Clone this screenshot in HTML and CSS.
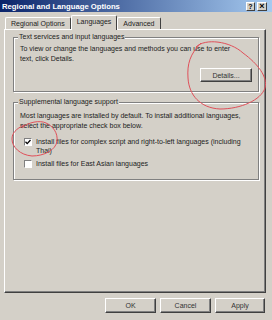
FILE: index.html
```html
<!DOCTYPE html>
<html lang="en">
<head>
    <meta charset="UTF-8">
    <title>Regional and Language Options</title>
    <link rel="stylesheet" href="styles.css">
</head>
<body>

    <div class="window">
        <div class="titlebar">
            <span class="title">Regional and Language Options</span>
            <div class="caption-btns">
                <span class="cbtn">?</span>
                <span class="cbtn close">&#215;</span>
            </div>
        </div>

        <div class="content">
            <div class="tabs">
                <div class="tab">Regional Options</div>
                <div class="tab active">Languages</div>
                <div class="tab">Advanced</div>
            </div>

            <div class="panel">
                <fieldset class="group first">
                    <legend>Text services and input languages</legend>
                    <p>To view or change the languages and methods you can use to enter<br>text, click Details.</p>
                    <div class="group-actions">
                        <button class="btn details">Details...</button>
                    </div>
                </fieldset>

                <fieldset class="group second">
                    <legend>Supplemental language support</legend>
                    <p>Most languages are installed by default. To install additional languages,<br>select the appropriate check box below.</p>
                    <label class="check first-check">
                        <span class="box checked">
                            <svg viewBox="0 0 6 6" width="6" height="6"><polyline points="0.5,2.8 2.2,4.6 5.5,1" fill="none" stroke="#000" stroke-width="1.3"/></svg>
                        </span>
                        <span>Install files for complex script and right-to-left languages (including<br>Thai)</span>
                    </label>
                    <label class="check">
                        <span class="box"></span>
                        <span>Install files for East Asian languages</span>
                    </label>
                </fieldset>
            </div>

            <div class="buttons">
                <button class="btn">OK</button>
                <button class="btn">Cancel</button>
                <button class="btn apply">Apply</button>
            </div>
        </div>

        <!-- marcas a mano sobre la captura -->
        <svg class="marks" width="272" height="320" viewBox="0 0 272 320">
            <path d="M196 47 C205 38 230 41 243 53 C258 64 268 77 265 88 C261 100 241 109 220 109 C200 108 189 95 188 78 C187 64 190 54 201 43" />
            <path d="M22 128 C28 122 40 120 46 123 C53 126 58 133 57 141 C56 150 44 156 32 156 C20 155 12 147 12 139 C12 133 16 129 24 125" />
        </svg>
    </div>

</body>
</html>
```

FILE: styles.css
```css
body {
    margin: 0;
    font-family: "Liberation Sans", Arial, sans-serif;
    font-size: 7px;
    color: #222;
}

.window {
    position: relative;
    width: 272px;
    height: 320px;
    background-color: #d4d0c8;
    overflow: hidden;
}

.titlebar {
    height: 12px;
    display: flex;
    align-items: center;
    padding: 0 5px 0 2px;
    background: linear-gradient(to right, #0a246a, #a6caf0);
}

.title {
    color: #fff;
    font-weight: bold;
    font-size: 7.7px;
}

.caption-btns {
    margin-left: auto;
    display: flex;
    gap: 2px;
}

.cbtn {
    width: 9px;
    height: 9px;
    box-sizing: border-box;
    background-color: #d4d0c8;
    border: 1px solid;
    border-color: #fff #404040 #404040 #fff;
    font-size: 7px;
    font-weight: bold;
    line-height: 7px;
    text-align: center;
    color: #000;
}

.cbtn.close {
    width: 10px;
    font-size: 9px;
}

.content {
    padding: 3px 6px 0 4px;
}

.tabs {
    display: flex;
    align-items: flex-end;
    height: 14px;
    padding-left: 1px;
}

.tab {
    height: 12px;
    box-sizing: border-box;
    padding: 0 5px;
    border: 1px solid;
    border-color: #fff #404040 transparent #fff;
    border-bottom: none;
    border-radius: 2px 2px 0 0;
    line-height: 11px;
}

.tab.active {
    position: relative;
    z-index: 1;
    height: 15px;
    margin-bottom: -1px;
    padding: 0 5px;
    line-height: 12px;
    background-color: #d4d0c8;
}

.panel {
    height: 264px;
    box-sizing: border-box;
    border: 1px solid;
    border-color: #fff #404040 #404040 #fff;
    box-shadow: inset -1px -1px #808080;
    padding: 3px 6px 0 8px;
}

.group {
    margin: 0;
    padding: 3px 6px 9px 6px;
    border: 1px solid #808080;
    box-shadow: inset 1px 1px #fff, 1px 1px #fff;
}

.group legend {
    padding: 0 1px;
    margin-left: -2px;
    line-height: 8px;
    background-color: #d4d0c8;
}

.group p {
    margin: 0;
    line-height: 9.5px;
}

.group.second {
    margin-top: 6px;
    padding-top: 5px;
    padding-bottom: 11px;
}

.group-actions {
    display: flex;
    justify-content: flex-end;
    margin-top: 5px;
}

.btn {
    height: 15px;
    width: 51px;
    box-sizing: border-box;
    padding: 0;
    font-family: inherit;
    font-size: 7px;
    color: #333;
    background-color: #d4d0c8;
    border: 1px solid;
    border-color: #fff #404040 #404040 #fff;
    box-shadow: inset -1px -1px #808080;
}

.btn.details {
    width: 52px;
    height: 14px;
}

.btn.apply {
    width: 50px;
}

.check {
    display: flex;
    align-items: flex-start;
    gap: 4px;
    margin: 4px 0 0 4px;
    line-height: 9px;
}

.check.first-check {
    margin-top: 7px;
}

.box {
    width: 8px;
    height: 8px;
    margin-top: 0.5px;
    box-sizing: border-box;
    flex: none;
    display: flex;
    align-items: center;
    justify-content: center;
    background-color: #fff;
    border: 1px solid;
    border-color: #808080 #fff #fff #808080;
}

.buttons {
    display: flex;
    justify-content: flex-end;
    gap: 4px;
    margin-top: 5px;
    padding-right: 1px;
}

.marks {
    position: absolute;
    left: 0;
    top: 0;
    pointer-events: none;
}

.marks path {
    fill: none;
    stroke: #e0505a;
    stroke-width: 1;
}
```
